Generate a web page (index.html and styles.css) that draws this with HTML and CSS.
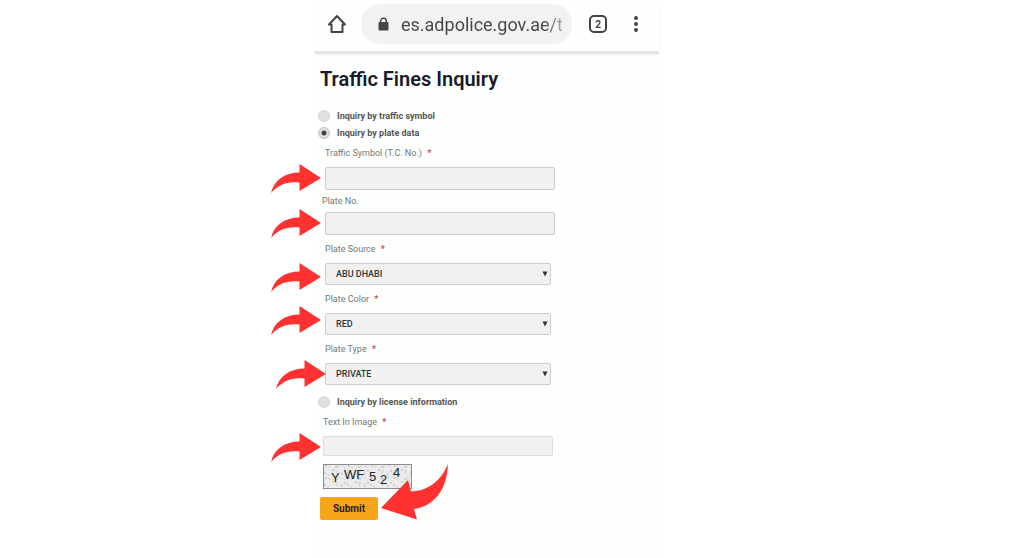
FILE: index.html
```html
<!DOCTYPE html>
<html lang="en">
<head>
  <meta charset="UTF-8">
  <meta name="viewport" content="width=device-width, initial-scale=1.0">
  <title>Traffic Fines Inquiry</title>
  <link rel="stylesheet" href="styles.css">
</head>
<body>
  <!-- shared shapes -->
  <svg class="defs" aria-hidden="true">
    <symbol id="arrow" viewBox="0 0 50 29">
      <path d="M50 14 28.500 0V8.500C14 8.500 3 16 0 29 7 21 16 17 28.500 18.500V27Z"/>
    </symbol>
    <symbol id="caret" viewBox="0 0 6 6">
      <path d="M0.500 0.500H5.500L3 5.500Z"/>
    </symbol>
  </svg>

  <main class="phone">
    <header class="toolbar">
      <button type="button" class="icon-button" aria-label="Home">
        <svg width="20" height="20" viewBox="0 0 20 20" fill="none" stroke="#444" stroke-width="2" stroke-linejoin="round">
          <path d="M10 2 2 10.500H4.500V18H15.500V10.500H18Z"/>
        </svg>
      </button>
      <div class="address">
        <svg width="11" height="14" viewBox="0 0 11 14">
          <path d="M2.700 6V4A2.800 2.800 0 0 1 8.300 4V6" fill="none" stroke="#444" stroke-width="1.400"/>
          <rect x="0.500" y="5" width="10" height="8.500" rx="1" fill="#444"/>
        </svg>
        <span class="url">es.adpolice.gov.ae/t</span>
      </div>
      <button type="button" class="icon-button tabs" aria-label="Open tabs">2</button>
      <button type="button" class="icon-button" aria-label="Menu">
        <svg width="6" height="18" viewBox="0 0 6 18" fill="#444">
          <circle cx="3" cy="3" r="2"/><circle cx="3" cy="9" r="2"/><circle cx="3" cy="15" r="2"/>
        </svg>
      </button>
    </header>

    <form class="inquiry">
      <h1>Traffic Fines Inquiry</h1>

      <label class="choice"><input type="radio" name="mode"> Inquiry by traffic symbol</label>
      <label class="choice"><input type="radio" name="mode" checked> Inquiry by plate data</label>

      <div class="field">
        <label for="symbol">Traffic Symbol (T.C. No.) <span class="required">*</span></label>
        <div class="control">
          <input type="text" id="symbol">
          <svg class="arrow"><use href="#arrow"/></svg>
        </div>
      </div>

      <div class="field field-tight">
        <label for="plate-no">Plate No.</label>
        <div class="control">
          <input type="text" id="plate-no">
          <svg class="arrow"><use href="#arrow"/></svg>
        </div>
      </div>

      <div class="field">
        <label for="source">Plate Source <span class="required">*</span></label>
        <div class="control control-select">
          <select id="source"><option>ABU DHABI</option></select>
          <svg class="caret"><use href="#caret"/></svg>
          <svg class="arrow arrow-low"><use href="#arrow"/></svg>
        </div>
      </div>

      <div class="field">
        <label for="color">Plate Color <span class="required">*</span></label>
        <div class="control control-select">
          <select id="color"><option>RED</option></select>
          <svg class="caret"><use href="#caret"/></svg>
          <svg class="arrow arrow-high"><use href="#arrow"/></svg>
        </div>
      </div>

      <div class="field">
        <label for="type">Plate Type <span class="required">*</span></label>
        <div class="control control-select">
          <select id="type"><option>PRIVATE</option></select>
          <svg class="caret"><use href="#caret"/></svg>
          <svg class="arrow arrow-near"><use href="#arrow"/></svg>
        </div>
      </div>

      <label class="choice choice-last"><input type="radio" name="mode"> Inquiry by license information</label>

      <div class="field field-captcha">
        <label for="captcha">Text In Image <span class="required">*</span></label>
        <div class="control">
          <input type="text" id="captcha">
          <svg class="arrow"><use href="#arrow"/></svg>
        </div>
        <svg class="captcha" width="89" height="25" viewBox="0 0 89 25">
          <defs>
            <pattern id="noise" width="23" height="12" patternUnits="userSpaceOnUse">
              <path d="M2 2h2M12 3h3M19 2h1M9 6h2M21 7h2M1 9h2M13 9h1M18 10h2" stroke="#b4b4b4"/>
              <path d="M5 3h2M15 1h2M1 6h1M12 7h3M18 8h1M4 11h2M21 4h1" stroke="#ccc"/>
            </pattern>
          </defs>
          <rect x="0.500" y="0.500" width="88" height="24" fill="#ebeceb"/>
          <rect x="0.500" y="0.500" width="88" height="24" fill="url(#noise)" stroke="#8c8c8c"/>
          <g class="captcha-text">
            <text x="8" y="18">Y</text>
            <text x="21" y="15">WF</text>
            <text x="46" y="17">5</text>
            <text x="57" y="20">2</text>
            <text x="70" y="13">4</text>
          </g>
        </svg>
      </div>

      <div class="actions">
        <button type="submit" class="submit">Submit</button>
        <svg class="arrow-big" viewBox="0 0 67 56">
          <path d="M0 44 27 16 30 27.500C47 27 60 17 67 0 66 25 54 42 33 45L36 55.500Z"/>
        </svg>
      </div>
    </form>
  </main>
</body>
</html>
```

FILE: styles.css
```css
* {
  box-sizing: border-box;
}

body {
  margin: 0;
  min-height: 100vh;
  display: grid;
  grid-template-columns: minmax(0, 315fr) minmax(0, 344fr) minmax(0, 365fr);
  background: #fff;
  font-family: Roboto, "Liberation Sans", sans-serif;
}

.defs {
  position: absolute;
  width: 0;
  height: 0;
}

.phone {
  grid-column: 2;
  background: #fdfffc;
}

/* browser bar */
.toolbar {
  display: flex;
  align-items: center;
  height: 54px;
  padding: 0 13px 3px 12px;
  border-bottom: 3px solid #e4e5e4;
  box-shadow: 0 1px 2px #eeefee;
  color: #444;
}

.icon-button {
  display: flex;
  justify-content: center;
  align-items: center;
  flex: none;
  width: 20px;
  height: 20px;
  padding: 0;
  border: none;
  background: none;
  color: #444;
}

.address {
  display: flex;
  flex: 1;
  align-items: center;
  gap: 12px;
  min-width: 0;
  height: 40px;
  margin: 0 17px 0 14px;
  padding: 0 10px 0 17px;
  border-radius: 20px;
  background: #f1f3f1;
}

.address svg {
  flex: none;
}

.url {
  overflow: hidden;
  white-space: nowrap;
  font-size: 18px;
  background: linear-gradient(to right, #444 88%, #aaa);
  background-clip: text;
  color: transparent;
}

.tabs {
  width: 18px;
  height: 18px;
  margin-right: 19px;
  border: 2px solid #444;
  border-radius: 5px;
  font: bold 10px Roboto, sans-serif;
}

/* form */
.inquiry {
  padding: 13px 5px 20px;
}

h1 {
  margin: 0 0 16px;
  font-size: 20px;
  line-height: 24px;
  font-weight: 600;
  color: #1a1a2b;
}

.choice {
  display: flex;
  align-items: center;
  gap: 7px;
  height: 17px;
  margin-left: -2px;
  font-size: 9px;
  font-weight: 700;
  color: #555;
}

.choice-last {
  margin-top: 8px;
}

.choice input {
  appearance: none;
  width: 12px;
  height: 12px;
  margin: 0;
  border: 1px solid #d6d7d6;
  border-radius: 50%;
  background: #dfe0df;
}

.choice input:checked {
  border-color: #c0c0c0;
  background: radial-gradient(circle, #444 0 2px, #dfe0df 3px);
}

.field {
  margin: 8px 0 0 5px;
}

.choice + .field {
  margin-top: 6px;
}

.field label {
  display: block;
  margin-bottom: 8px;
  font-size: 9px;
  line-height: 12px;
  color: #777;
}

.field-tight {
  margin-top: 5px;
}

.field-tight label {
  margin: 0 0 5px -3px;
}

.required {
  margin-left: 3px;
  font-weight: 700;
  color: #d4405c;
}

.control {
  position: relative;
  max-width: 230px;
}

.control-select {
  max-width: 226px;
}

.control input,
.control select {
  display: block;
  appearance: none;
  width: 100%;
  height: 23px;
  margin: 0;
  border: 1px solid #cccdcc;
  border-radius: 2px;
  background: #f0f1f0;
}

.control select {
  height: 22px;
  padding: 0 10px;
  font: 500 9px Roboto, sans-serif;
  color: #333;
}

.caret {
  position: absolute;
  top: 8px;
  right: 3px;
  width: 6px;
  height: 6px;
  fill: #333;
}

.field-captcha {
  margin-left: 3px;
}

.field-captcha .control input {
  height: 20px;
  border-color: #dcdddc;
}

.captcha {
  display: block;
  margin-top: 8px;
}

.captcha-text {
  font: 13px "Liberation Sans", sans-serif;
  fill: #222;
}

.actions {
  display: flex;
  position: relative;
  margin-top: 8px;
}

.submit {
  width: 58px;
  height: 23px;
  padding: 0;
  border: none;
  border-radius: 2px;
  background: #f9a51a;
  font: 700 10px Roboto, sans-serif;
  color: #2b1a1e;
}

/* red pointers lying over the form */
.arrow {
  position: absolute;
  top: -3px;
  left: -54px;
  width: 50px;
  height: 29px;
  fill: #ff3131;
}

.arrow-low {
  top: 0;
}

.arrow-high {
  top: -7px;
}

.arrow-near {
  left: -49px;
}

.field-captcha .arrow {
  left: -52px;
}

.arrow-big {
  position: absolute;
  top: -33px;
  left: 61px;
  width: 67px;
  height: 56px;
  fill: #ff3131;
}
```
